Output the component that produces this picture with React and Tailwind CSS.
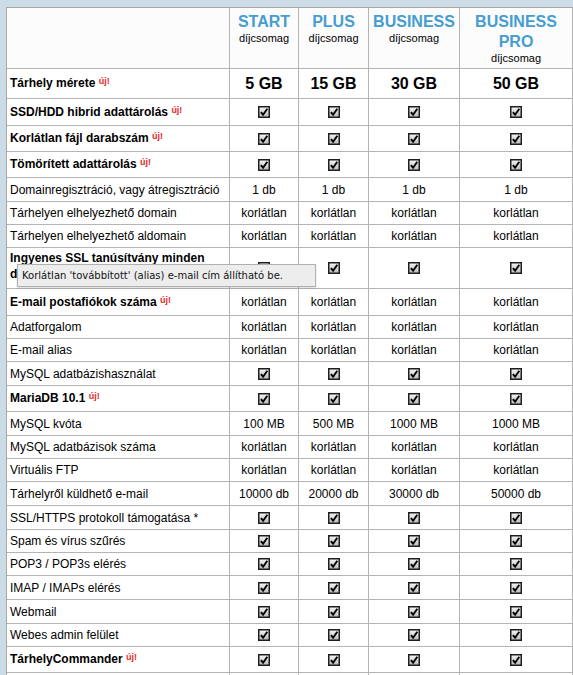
import React from "react";

const Check = () => (
  <svg width="12" height="12" viewBox="0 0 12 12" className="block">
    <defs>
      <linearGradient id="cbg" x1="0" y1="0" x2="0" y2="1">
        <stop offset="0" stopColor="#f6f6f6" />
        <stop offset="1" stopColor="#b9b9b9" />
      </linearGradient>
    </defs>
    <rect x="0.75" y="0.75" width="10.5" height="10.5" fill="url(#cbg)" stroke="#1e1e1e" strokeWidth="1.5" />
    <path d="M2.9 6.1 L5.1 8.7 L9.3 2.7" fill="none" stroke="#000" strokeWidth="1.9" strokeLinejoin="miter" />
  </svg>
);

const C = "check";

const rows = [
  { h: "h-[30px]", label: "Tárhely mérete", bold: true, isNew: true, big: true, v: ["5 GB", "15 GB", "30 GB", "50 GB"] },
  { h: "h-[27px]", label: "SSD/HDD hibrid adattárolás", bold: true, isNew: true, v: [C, C, C, C] },
  { h: "h-[26px]", label: "Korlátlan fájl darabszám", bold: true, isNew: true, v: [C, C, C, C] },
  { h: "h-[26px]", label: "Tömörített adattárolás", bold: true, isNew: true, v: [C, C, C, C] },
  { h: "h-[24px]", label: "Domainregisztráció, vagy átregisztráció", v: ["1 db", "1 db", "1 db", "1 db"] },
  { h: "h-[23px]", label: "Tárhelyen elhelyezhető domain", v: ["korlátlan", "korlátlan", "korlátlan", "korlátlan"] },
  { h: "h-[23px]", label: "Tárhelyen elhelyezhető aldomain", v: ["korlátlan", "korlátlan", "korlátlan", "korlátlan"] },
  { h: "h-[41px]", label: "Ingyenes SSL tanúsítvány minden domainhez", bold: true, isNew: true, tall: true, v: [C, C, C, C] },
  { h: "h-[27px]", label: "E-mail postafiókok száma", bold: true, isNew: true, v: ["korlátlan", "korlátlan", "korlátlan", "korlátlan"] },
  { h: "h-[23px]", label: "Adatforgalom", v: ["korlátlan", "korlátlan", "korlátlan", "korlátlan"] },
  { h: "h-[23px]", label: "E-mail alias", v: ["korlátlan", "korlátlan", "korlátlan", "korlátlan"] },
  { h: "h-[24px]", label: "MySQL adatbázishasználat", v: [C, C, C, C] },
  { h: "h-[26px]", label: "MariaDB 10.1", bold: true, isNew: true, v: [C, C, C, C] },
  { h: "h-[24px]", label: "MySQL kvóta", v: ["100 MB", "500 MB", "1000 MB", "1000 MB"] },
  { h: "h-[23px]", label: "MySQL adatbázisok száma", v: ["korlátlan", "korlátlan", "korlátlan", "korlátlan"] },
  { h: "h-[23px]", label: "Virtuális FTP", v: ["korlátlan", "korlátlan", "korlátlan", "korlátlan"] },
  { h: "h-[24px]", label: "Tárhelyről küldhető e-mail", v: ["10000 db", "20000 db", "30000 db", "50000 db"] },
  { h: "h-[24px]", label: "SSL/HTTPS protokoll támogatása *", v: [C, C, C, C] },
  { h: "h-[23px]", label: "Spam és vírus szűrés", v: [C, C, C, C] },
  { h: "h-[23px]", label: "POP3 / POP3s elérés", v: [C, C, C, C] },
  { h: "h-[24px]", label: "IMAP / IMAPs elérés", v: [C, C, C, C] },
  { h: "h-[24px]", label: "Webmail", v: [C, C, C, C] },
  { h: "h-[23px]", label: "Webes admin felület", v: [C, C, C, C] },
  { h: "h-[26px]", label: "TárhelyCommander", bold: true, isNew: true, v: [C, C, C, C] },
  { h: "h-[24px]", label: "", v: ["", "", "", ""] },
];

const plans = ["START", "PLUS", "BUSINESS", "BUSINESS PRO"];

const GRID = "grid grid-cols-[223px_69px_70px_91px_113px]";

function Row({ r }) {
  return (
    <div className={`${GRID} ${r.h} border-b border-[#b4b4b4]`}>
      <div
        className={`flex items-center pl-[3px] pr-[4px] border-r border-[#b4b4b4] text-[12px] text-black ${
          r.bold ? "font-bold" : ""
        } ${r.tall ? "pb-[3px] leading-[16px]" : "leading-[14px]"}`}
      >
        <span>
          {r.label}
          {r.isNew && (
            <>
              {" "}
              <span className="relative top-[-3px] text-[9px] font-bold text-[#e42b2b]">új!</span>
            </>
          )}
        </span>
      </div>
      {r.v.map((val, i) => (
        <div
          key={i}
          className={`flex items-center justify-center border-r border-[#b4b4b4] text-black ${
            r.big ? "text-[16px] font-bold" : "text-[12px]"
          }`}
        >
          {val === C ? <Check /> : val}
        </div>
      ))}
    </div>
  );
}

export default function App() {
  return (
    <div className="relative h-[675px] w-[573px] overflow-hidden bg-[#ccdce6] pl-[6px] pt-[7px] font-['Liberation_Sans',Arial,sans-serif]">
      <div className="w-[567px] border-l border-t border-[#a8a8a8] bg-white">
        <div className={`${GRID} h-[61px] border-b border-[#b4b4b4] bg-[#fcfcfc]`}>
          <div className="border-r border-[#b4b4b4]" />
          {plans.map((name, i) => (
            <div key={i} className="flex flex-col items-center border-r border-[#b4b4b4] px-[3px] pt-[4px] text-center">
              <div className="text-[16px] font-bold leading-[20px] text-[#469dd0]">{name}</div>
              <div className="text-[11px] leading-[12px] text-black">díjcsomag</div>
            </div>
          ))}
        </div>
        {rows.map((r, i) => (
          <Row key={i} r={r} />
        ))}
      </div>
      <div className="absolute left-[17px] top-[264px] flex h-[23px] w-[299px] items-center whitespace-nowrap border border-[#b0b0b0] bg-[#ededed] pl-[4px] font-['DejaVu_Sans',sans-serif] text-[10px] text-[#111] shadow-[0_1px_2px_rgba(0,0,0,0.15)]">
        Korlátlan 'továbbított' (alias) e-mail cím állítható be.
      </div>
    </div>
  );
}
